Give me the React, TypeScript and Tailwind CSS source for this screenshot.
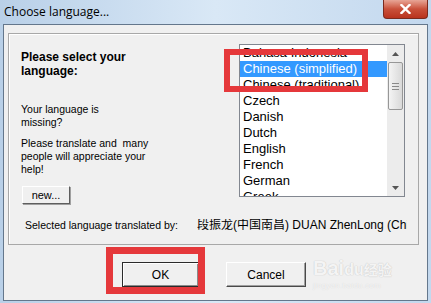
import React from 'react';

const languages = [
    'Bahasa Indonesia',
    'Chinese (simplified)',
    'Chinese (traditional)',
    'Czech',
    'Danish',
    'Dutch',
    'English',
    'French',
    'German',
    'Greek',
];

const ScrollArrow: React.FC<{ down?: boolean }> = ({ down }) => (
    <div className="h-[17px] w-[17px] flex items-center justify-center">
        <svg width="7" height="4" viewBox="0 0 7 4">
            <path d={down ? 'M0 0 H7 L3.5 4 Z' : 'M0 4 H7 L3.5 0 Z'} fill="#555" />
        </svg>
    </div>
);

const LanguageList: React.FC = () => (
    <div className="w-[166px] h-[153px] border border-[#828790] bg-white flex overflow-hidden">
        <div className="flex-1 flex flex-col overflow-hidden">
            {languages.map((lang, i) => (
                <div
                    key={lang}
                    className={
                        'h-[16px] shrink-0 leading-[16px] pl-[3px] text-[13px] whitespace-nowrap ' +
                        (i === 1 ? 'bg-[#3399ff] text-white' : 'text-black')
                    }
                >
                    {lang}
                </div>
            ))}
        </div>
        {/* scrollbar */}
        <div className="w-[17px] bg-[#ececec] flex flex-col">
            <ScrollArrow />
            <div className="mx-px h-[48px] rounded-[2px] border border-[#979797] bg-gradient-to-r from-[#f4f4f4] to-[#d9d9d9] flex flex-col items-center justify-center gap-[2px]">
                <div className="w-[7px] h-px bg-[#8a8a8a]" />
                <div className="w-[7px] h-px bg-[#8a8a8a]" />
                <div className="w-[7px] h-px bg-[#8a8a8a]" />
            </div>
            <div className="flex-1" />
            <ScrollArrow down />
        </div>
    </div>
);

export default function App() {
    return (
        <div
            className="relative w-[431px] h-[303px] overflow-hidden bg-gradient-to-r from-[#b9d0e8] via-[#d9e8f6] to-[#c3d8ee]"
            style={{ fontFamily: '"Liberation Sans", Arial, sans-serif' }}
        >
            {/* title bar */}
            <div className="h-[24px] flex items-center pl-[4px]">
                <span className="text-[12px] text-black" style={{ fontFamily: '"Open Sans", "Noto Sans", sans-serif' }}>
                    Choose language...
                </span>
            </div>
            <div className="absolute left-[383px] top-0 w-[45px] h-[19px] rounded-b-[4px] border border-t-0 border-[#7a2a1e] bg-gradient-to-b from-[#e7a596] via-[#c9503a] to-[#b9321d] flex items-center justify-center">
                <svg width="11" height="10" viewBox="0 0 11 10">
                    <path d="M1.5 1 L9.5 9 M9.5 1 L1.5 9" stroke="#fff" strokeWidth="2.4" strokeLinecap="square" />
                </svg>
            </div>

            {/* client area */}
            <div className="mx-[3px] h-[277px] border border-[#64778c] bg-[#f0f0f0]">
                {/* group box */}
                <div className="ml-[4px] mt-[8px] w-[411px] h-[212px] border border-[#a8a8a8] shadow-[inset_1px_1px_0_#ffffff]">
                    <div className="flex h-[170px] pt-[10px]">
                        <div className="w-[230px] pl-[12px] text-black">
                            <div className="mt-[6px] text-[12px] font-bold leading-[14px]">
                                Please select your
                                <br />
                                language:
                            </div>
                            <div className="mt-[25px] text-[10.5px] leading-[13px]">
                                Your language is
                                <br />
                                missing?
                            </div>
                            <div className="mt-[8px] text-[10.5px] leading-[13px] whitespace-pre">
                                {'Please translate and  many\npeople will appreciate your\nhelp!'}
                            </div>
                            <button className="mt-[10px] ml-px w-[48px] h-[18px] border border-t-white border-l-white border-b-[#5e5e5e] border-r-[#5e5e5e] bg-[#f0f0f0] text-[11px] leading-none text-black shadow-[1px_1px_0_#a0a0a0]">
                                new...
                            </button>
                        </div>
                        <LanguageList />
                    </div>
                    <div className="mt-[15px] h-[13px] pl-[16px] flex items-center text-[10.5px] leading-[13px] text-black whitespace-nowrap">
                        <span className="w-[172px] shrink-0">Selected language translated by:</span>
                        <span
                            className="w-[210px] overflow-hidden text-[12px]"
                            style={{ fontFamily: '"Liberation Sans", "Noto Sans CJK SC", sans-serif' }}
                        >
                            段振龙(中国南昌) DUAN ZhenLong (China)
                        </span>
                    </div>
                </div>

                {/* dialog buttons */}
                <div className="mt-[17px] ml-[118px] flex gap-[27px]">
                    <button className="w-[77px] h-[25px] border border-[#2b2b2b] bg-[#f0f0f0] shadow-[inset_1px_1px_0_#fff,inset_-1px_-1px_0_#8a8a8a] text-[12px] text-black">
                        OK
                    </button>
                    <button className="w-[80px] h-[25px] border border-t-white border-l-white border-b-[#4a4a4a] border-r-[#4a4a4a] bg-[#f0f0f0] shadow-[inset_-1px_-1px_0_#a0a0a0] text-[12px] text-black">
                        Cancel
                    </button>
                </div>
            </div>

            {/* baidu watermark */}
            <div className="absolute left-[313px] top-[257px] flex flex-col items-start pointer-events-none">
                <span
                    className="text-[20px] font-bold leading-[22px] text-white/80"
                    style={{ textShadow: '0 0 1px #c8c8c8, 0 0 1px #c8c8c8' }}
                >
                    Bai<span className="text-[16px]">du</span>
                    <span className="text-[14px]" style={{ fontFamily: '"Noto Sans CJK SC", sans-serif' }}>经验</span>
                </span>
                <span className="text-[8px] leading-[10px] text-white/70 tracking-wide" style={{ textShadow: '0 0 1px #cfcfcf' }}>
                    jingyan.baidu.com
                </span>
            </div>

            {/* red annotation boxes */}
            <div className="absolute left-[224px] top-[49px] w-[144px] h-[43px] border-[6px] border-[#e5383b]" />
            <div className="absolute left-[106px] top-[247px] w-[99px] h-[47px] border-[7px] border-[#e5383b]" />
        </div>
    );
}
